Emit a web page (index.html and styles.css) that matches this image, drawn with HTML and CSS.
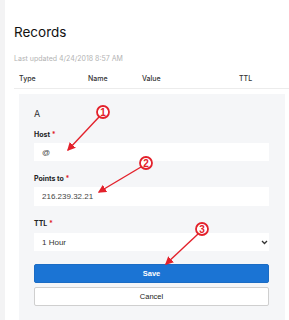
FILE: index.html
```html
<!DOCTYPE html>
<html>
<head>
  <meta name="viewport" content="width=device-width, initial-scale=1">
  <link rel="stylesheet" href="styles.css">
</head>
<body>
  <div class="page">
    <!-- Title -->
    <h1 class="title">Records</h1>
    <p class="updated">Last updated 4/24/2018 8:57 AM</p>

    <!-- Table head -->
    <div class="table-head">
      <span>Type</span>
      <span>Name</span>
      <span>Value</span>
      <span>TTL</span>
    </div>

    <!-- Edit panel -->
    <div class="panel">
      <div class="rec-type">A</div>

      <label class="field-label">Host <span class="req">*</span></label>
      <input class="field" type="text" value="@">

      <label class="field-label gap">Points to <span class="req">*</span></label>
      <input class="field tall" type="text" value="216.239.32.21">

      <label class="field-label gap">TTL <span class="req">*</span></label>
      <div class="select-wrap">
        <select class="field">
          <option>1 Hour</option>
        </select>
        <svg class="chevron" width="7" height="5" viewBox="0 0 7 5">
          <path d="M1 1 L3.5 3.5 L6 1" fill="none" stroke="#333" stroke-width="1.3"/>
        </svg>
      </div>

      <button class="btn save">Save</button>
      <button class="btn cancel">Cancel</button>
    </div>

    <!-- Annotation arrows drawn over the form -->
    <svg class="marks" width="289" height="320" viewBox="0 0 289 320">
      <defs>
        <marker id="head" markerWidth="6" markerHeight="6" refX="5" refY="3" orient="auto">
          <path d="M0 0 L6 3 L0 6 Z" fill="#e3212b"/>
        </marker>
      </defs>
      <g fill="none" stroke="#e3212b" stroke-width="1.4">
        <line x1="99" y1="117" x2="68" y2="150" marker-end="url(#head)"/>
        <line x1="141" y1="167" x2="99" y2="192" marker-end="url(#head)"/>
        <line x1="198" y1="234" x2="166" y2="264" marker-end="url(#head)"/>
      </g>
      <g fill="#fff" stroke="#e3212b" stroke-width="1.8">
        <circle cx="103" cy="112" r="6"/>
        <circle cx="146" cy="163" r="6"/>
        <circle cx="202" cy="229" r="6"/>
      </g>
      <g fill="#e3212b" font-family="Liberation Sans, sans-serif" font-weight="700" font-size="10" text-anchor="middle">
        <text x="103" y="115.5">1</text>
        <text x="146" y="166.5">2</text>
        <text x="202" y="232.5">3</text>
      </g>
    </svg>
  </div>
</body>
</html>
```

FILE: styles.css
```css
/* =====================
   BASE
   ===================== */
body {
  margin: 0;
  background: #fff;
  font-family: Inter, "Open Sans", sans-serif;
  color: #222;
}
* {
  box-sizing: border-box;
}

.page {
  position: relative;
  height: 320px;
  overflow: hidden;
  border-left: 5px solid #f3f3f4;
  padding: 24px 0 0 9px;
}

/* =====================
   HEADER
   ===================== */
.title {
  margin: 0;
  font-size: 13.5px;
  line-height: 16px;
  font-weight: 400;
  color: #111;
}
.updated {
  margin: 14px 0 0 0;
  font-size: 7px;
  line-height: 10px;
  color: #b3b3b3;
}

.table-head {
  margin-top: 10px;
  padding: 0 0 4px 5px;
  display: grid;
  grid-template-columns: 69px 54px 97px 1fr;
  font-size: 7px;
  line-height: 10px;
  font-weight: 500;
  color: #333;
  border-bottom: 1px solid #ececec;
}

/* =====================
   EDIT PANEL
   ===================== */
.panel {
  margin: 5px 4px 0 5px;
  background: #f5f6f8;
  padding: 14px 16px 20px 15px;
  display: flex;
  flex-direction: column;
}
.rec-type {
  font-size: 9px;
  line-height: 12px;
  color: #333;
}
.field-label {
  margin-top: 10px;
  font-size: 7px;
  line-height: 10px;
  font-weight: 700;
  color: #222;
}
.field-label.gap {
  margin-top: 13px;
}
.req {
  color: #e0242b;
}

.field {
  margin-top: 3px;
  width: 100%;
  height: 18px;
  border: none;
  border-radius: 0;
  background: #fff;
  padding: 0 8px;
  font-family: "Liberation Sans", Arial, sans-serif;
  font-size: 8px;
  color: #444;
  outline: none;
}
.field.tall {
  height: 19px;
}

.select-wrap {
  position: relative;
  margin-top: 1px;
}
.select-wrap select {
  appearance: none;
  -webkit-appearance: none;
  display: block;
  color: #333;
}
.chevron {
  position: absolute;
  right: 1px;
  top: 10px;
}

/* =====================
   BUTTONS
   ===================== */
.btn {
  width: 100%;
  height: 19px;
  border-radius: 2px;
  font-family: "Liberation Sans", Arial, sans-serif;
  font-size: 7.5px;
  cursor: pointer;
}
.save {
  margin-top: 13px;
  background: #1b74d4;
  border: 1px solid #1b6cc4;
  color: #fff;
  font-weight: 700;
}
.cancel {
  margin-top: 4px;
  background: #fff;
  border: 1px solid #cfcfcf;
  color: #222;
}

/* Annotation overlay */
.marks {
  position: absolute;
  left: -5px;
  top: 0;
  pointer-events: none;
}
```
